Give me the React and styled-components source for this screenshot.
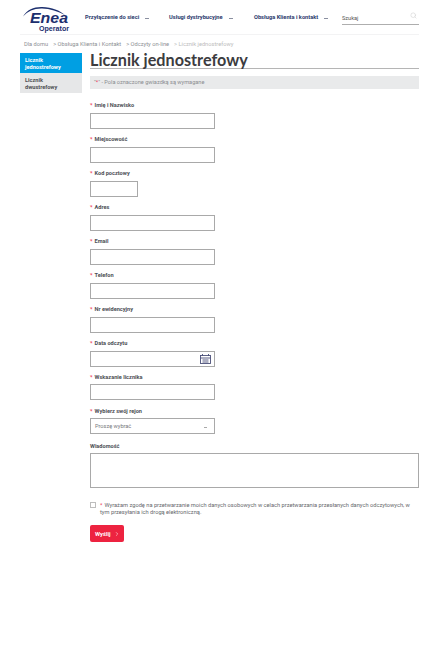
import React from "react"
import styled, { createGlobalStyle } from "styled-components"
import { Search, ChevronRight } from "lucide-react"

const Global = createGlobalStyle`
  html, body {
    margin: 0;
    padding: 0;
    background: #fff;
    font-family: "Roboto", "Liberation Sans", sans-serif;
  }
`

const Page = styled.div`
  width: 442px;
  height: 662px;
  overflow: hidden;
  padding: 0 23px 0 20px;
  box-sizing: border-box;
`

const Header = styled.header`
  height: 34px;
  display: flex;
  align-items: flex-start;
  border-bottom: 1px solid #f3f3f4;
`

const LogoBox = styled.div`
  width: 65px;
  flex: none;
  padding-top: 6px;
`

const NavList = styled.nav`
  display: flex;
  width: 257px;
  flex: none;
  padding-top: 13px;
`

const NavItem = styled.a`
  display: flex;
  align-items: center;
  width: ${props => props.$width}px;
  flex: none;
  font-size: 5.7px;
  font-weight: 700;
  color: #2b3a6d;
  line-height: 8px;
  white-space: nowrap;

  &::after {
    content: "";
    width: 4px;
    height: 1px;
    margin-left: 6px;
    margin-top: 3px;
    background: #8a8fa0;
  }
`

const SearchBox = styled.div`
  width: 77px;
  height: 25px;
  box-sizing: border-box;
  display: flex;
  align-items: flex-end;
  border-bottom: 1px solid #aeaeae;
  padding-bottom: 3px;
  font-size: 5.6px;
  color: #555;
  position: relative;

  svg {
    position: absolute;
    top: 12px;
    right: 2px;
    color: #d2d2d2;
  }
`

const Crumbs = styled.div`
  height: 18px;
  display: flex;
  align-items: center;
  padding-left: 4px;
  font-size: 5.7px;
  color: #8d8f94;
`

const Crumb = styled.span`
  margin-right: 5px;
  color: ${props => (props.$last ? "#bdbdbd" : "#8d8f94")};
`

const Columns = styled.div`
  display: flex;
  gap: 8px;
  align-items: flex-start;
`

const Sidebar = styled.aside`
  width: 62px;
  flex: none;
`

const SideItem = styled.div`
  height: 20px;
  box-sizing: border-box;
  padding: 4px 5px 0;
  font-size: 5.6px;
  line-height: 6.6px;
  font-weight: 700;
  background: ${props => (props.$active ? "#009fe3" : "#e6e7e8")};
  color: ${props => (props.$active ? "#fff" : "#4d4f55")};
`

const Main = styled.main`
  flex: 1;
  min-width: 0;
`

const Title = styled.h1`
  margin: -2px 0 0;
  height: 17px;
  font-family: "Lato", sans-serif;
  font-size: 16.2px;
  font-weight: 700;
  line-height: 17px;
  color: #3c3c40;
  border-bottom: 1px solid #b5b5b5;
`

const Note = styled.div`
  margin-top: 7px;
  height: 13px;
  line-height: 13px;
  padding-left: 4px;
  background: #e9eaeb;
  font-size: 5.6px;
  color: #8a8c90;
`

const Form = styled.div`
  margin-top: 12px;
`

const Field = styled.div`
  height: 34px;
`

const Label = styled.label`
  display: block;
  height: ${props => (props.$tight ? 11 : 12)}px;
  line-height: 9px;
  font-size: 5.6px;
  font-weight: 700;
  color: #4d4f55;
`

const Star = styled.span`
  color: #ee3a55;
  margin-right: ${props => (props.$flush ? 0 : 2)}px;
`

const InputBox = styled.div`
  width: ${props => props.$width || 125}px;
  height: 16px;
  box-sizing: border-box;
  border: 1px solid #a9a9a9;
  background: #fff;
  display: flex;
  align-items: center;
  justify-content: space-between;
  padding: 0 3px 0 4px;
  font-size: 5.6px;
  color: #77797d;
`

const Dash = styled.span`
  width: 3px;
  height: 1px;
  background: #a9a9a9;
  margin: 3px 4px 0 0;
`

const MessageLabel = styled(Label)`
  height: 11px;
  margin-top: 1px;
`

const Textarea = styled.div`
  height: 35px;
  box-sizing: border-box;
  border: 1px solid #a9a9a9;
`

const Consent = styled.div`
  display: flex;
  gap: 4px;
  margin-top: 14px;
  font-size: 5.7px;
  line-height: 6.6px;
  color: #66686c;
`

const ConsentText = styled.span`
  width: 318px;
`

const Checkbox = styled.span`
  width: 6px;
  height: 6px;
  box-sizing: border-box;
  flex: none;
  border: 1px solid #bdbdbd;
`

const SendButton = styled.button`
  display: flex;
  align-items: center;
  gap: 3px;
  margin-top: 10px;
  width: 34px;
  height: 17px;
  padding: 0 0 0 5px;
  border: 0;
  border-radius: 2px;
  background: #ed2340;
  color: #fff;
  font-family: inherit;
  font-size: 5.8px;
  font-weight: 700;
`

const fields = [
  { label: "Imię i Nazwisko" },
  { label: "Miejscowość" },
  { label: "Kod pocztowy", width: 48 },
  { label: "Adres" },
  { label: "Email" },
  { label: "Telefon" },
  { label: "Nr ewidencyjny" },
  { label: "Data odczytu", calendar: true },
  { label: "Wskazanie licznika", tight: true },
  { label: "Wybierz swój rejon", tight: true, select: true },
]

const EneaLogo = () => (
  <svg width="50" height="27" viewBox="0 0 50 27">
    <path d="M3 10.5 C7 3.5 14 0.8 22 1 C32 1.3 40 4.5 45 9 C38 5 30 2.6 22 2.4 C14 2.2 8 5 3 10.5 Z" fill="#1c2f6e" />
    <text x="10" y="17" textLength="38" lengthAdjust="spacingAndGlyphs" fontFamily="Liberation Sans" fontWeight="700" fontStyle="italic" fontSize="14" fill="#1c2f6e">Enea</text>
    <text x="19" y="25" textLength="30" lengthAdjust="spacingAndGlyphs" fontFamily="Liberation Sans" fontWeight="700" fontSize="6.4" fill="#1c2f6e">Operator</text>
  </svg>
)

const CalendarIcon = () => (
  <svg width="11" height="10" viewBox="0 0 11 10" fill="none" stroke="#4a4f78" strokeWidth="0.9">
    <rect x="0.5" y="1.5" width="10" height="8" />
    <path d="M0.5 4h10M2.5 0v2M8.5 0v2M2.5 6h6M2.5 8h6" />
  </svg>
)

const App = () => (
  <>
    <Global />
    <Page>
      <Header>
        <LogoBox><EneaLogo /></LogoBox>
        <NavList>
          <NavItem $width={84}>Przyłączenie do sieci</NavItem>
          <NavItem $width={85}>Usługi dystrybucyjne</NavItem>
          <NavItem $width={88}>Obsługa Klienta i kontakt</NavItem>
        </NavList>
        <SearchBox>
          Szukaj
          <Search size={7} />
        </SearchBox>
      </Header>
      <Crumbs>
        <Crumb>Dla domu</Crumb>
        <Crumb>&gt; Obsługa Klienta i Kontakt</Crumb>
        <Crumb>&gt; Odczyty on-line</Crumb>
        <Crumb $last>&gt; Licznik jednostrefowy</Crumb>
      </Crumbs>
      <Columns>
        <Sidebar>
          <SideItem $active>Licznik<br />jednostrefowy</SideItem>
          <SideItem>Licznik<br />dwustrefowy</SideItem>
        </Sidebar>
        <Main>
          <Title>Licznik jednostrefowy</Title>
          <Note>"<Star $flush>*</Star>" - Pola oznaczone gwiazdką są wymagane</Note>
          <Form>
            {fields.map(f => (
              <Field key={f.label}>
                <Label $tight={f.tight}><Star>*</Star>{f.label}</Label>
                <InputBox $width={f.width}>
                  {f.select && <span>Proszę wybrać</span>}
                  {f.select && <Dash />}
                  {f.calendar && <span />}
                  {f.calendar && <CalendarIcon />}
                </InputBox>
              </Field>
            ))}
            <MessageLabel>Wiadomość</MessageLabel>
            <Textarea />
            <Consent>
              <Checkbox />
              <ConsentText><Star>*</Star>Wyrażam zgodę na przetwarzanie moich danych osobowych w celach przetwarzania przesłanych danych odczytowych, w tym przesyłania ich drogą elektroniczną.</ConsentText>
            </Consent>
            <SendButton>Wyślij <ChevronRight size={6} /></SendButton>
          </Form>
        </Main>
      </Columns>
    </Page>
  </>
)

export default App
